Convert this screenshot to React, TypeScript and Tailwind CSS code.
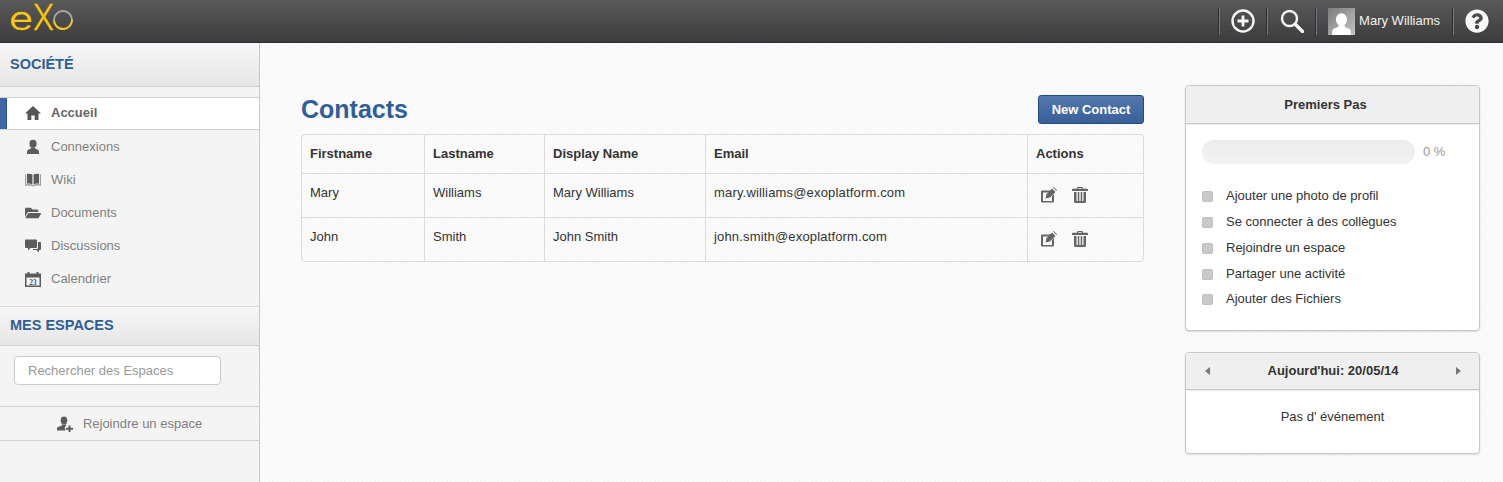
import { FaFolderOpen, FaQuestionCircle } from 'react-icons/fa'
import type { ReactNode } from 'react'

function Logo() {
  return (
    <svg viewBox="0 0 64 34" className="w-[64px] h-[34px] ml-[10px] self-start overflow-visible" fill="#fbc80f">
      <text x="-1" y="30" fontSize="33" fontWeight="300" fontFamily="Inter, sans-serif" stroke="#fbc80f" strokeWidth=".4" textLength="24" lengthAdjust="spacingAndGlyphs">e</text>
      <text x="23" y="30" fontSize="36" fontWeight="300" fontFamily="Inter, sans-serif" stroke="#fbc80f" strokeWidth=".3" textLength="21" lengthAdjust="spacingAndGlyphs">X</text>
      <circle cx="53" cy="20" r="9" fill="none" stroke="#a8a8a8" strokeWidth="1.800" />
      <path d="M44 20.500a9 9 0 0 0 18-1" fill="none" stroke="#fbc80f" strokeWidth="1.800" />
    </svg>
  )
}

function HomeIcon() {
  return (
    <svg viewBox="0 0 16 16" className="w-4 h-4" fill="currentColor">
      <path d="M8 1 16 8.500H13.500V15H9.700V10.500H6.300V15H2.500V8.500H0z" />
    </svg>
  )
}

function UserIcon({ className = 'w-4 h-4' }: { className?: string }) {
  return (
    <svg viewBox="0 0 16 16" className={className} fill="currentColor">
      <ellipse cx="8" cy="4.800" rx="3.600" ry="4" />
      <path d="M6 8.500h4l.4 1.200c1.700.6 3.600 1 3.600 3V15H2v-2.300c0-2 1.900-2.400 3.600-3z" />
    </svg>
  )
}

function BookIcon() {
  return (
    <svg viewBox="0 0 16 16" className="w-4 h-4" fill="currentColor">
      <path d="M0 2.500 1.200 2v10.500c2-.6 4.500-.6 6.800.7 2.300-1.300 4.800-1.300 6.800-.7V2l1.200.5V14c-2.500-.7-5.500-.7-8 .5-2.500-1.200-5.500-1.200-8-.5z" opacity=".55" />
      <path d="M2 2c2-.4 4-.3 5.400.6v9.800c-1.600-.8-3.500-1-5.400-.7zM14 2c-2-.4-4-.3-5.400.6v9.800c1.600-.8 3.500-1 5.400-.7z" />
    </svg>
  )
}

function ChatIcon() {
  return (
    <svg viewBox="0 0 16 16" className="w-4 h-4" fill="currentColor">
      <path d="M1 1.500h10a1 1 0 0 1 1 1V9a1 1 0 0 1-1 1H5.500L3 12.500V10H1a1 1 0 0 1-1-1V2.500a1 1 0 0 1 1-1z" />
      <path d="M13 4h2a1 1 0 0 1 1 1v6a1 1 0 0 1-1 1h-1v2.500L11.500 12H7.500l1-1H12a1 1 0 0 0 1-1z" />
    </svg>
  )
}

function CalendarIcon() {
  return (
    <svg viewBox="0 0 16 16" className="w-4 h-4">
      <path d="M0 2.500h2.500V1h2v1.500h7V1h2v1.500H16V16H0z" fill="currentColor" />
      <rect x="1.500" y="6.500" width="13" height="8" fill="#f4f4f4" />
      <text x="8" y="13.500" textAnchor="middle" fontSize="7.500" fontWeight="bold" fontFamily="'Liberation Serif', serif" fill="#555">23</text>
    </svg>
  )
}

function JoinIcon() {
  return (
    <svg viewBox="0 0 16 16" className="w-4 h-4" fill="currentColor">
      <ellipse cx="7" cy="4.500" rx="3.300" ry="4" />
      <path d="M5 8.500h4l.3 1.300C8 10.200 7.500 11.500 8 13c.2.600.5 1 .8 1.500H0v-1.800c0-2 2.800-2.400 4.600-3z" />
      <path d="M11.500 9.500h2v2.200H16v2h-2.500V16h-2v-2.300H9v-2h2.500z" />
    </svg>
  )
}

function EditIcon() {
  return (
    <svg viewBox="0 0 16 16" className="w-4 h-4 text-[#666]" fill="currentColor">
      <path d="M0 4.500a1 1 0 0 1 1-1h8.500L7.500 5.500H2V14h9V9l2-2v7.500a1 1 0 0 1-1 1H1a1 1 0 0 1-1-1z" />
      <path d="M4.500 11.500 5.500 7 11 1.500l3.500 3.500L9 10.500zM12 .5l.7-.5 3.300 3.300-.6.700z" />
    </svg>
  )
}

function TrashIcon() {
  return (
    <svg viewBox="0 0 16 16" className="w-4 h-4 text-[#666]" fill="currentColor">
      <path fillRule="evenodd" d="M5.500 0h5l.7 1.800h3.800c.6 0 1 .4 1 1V4H0V2.800c0-.6.4-1 1-1h3.800zM6.500 1l-.2.800h3.400L9.500 1z" />
      <path d="M2 5h2.500v9h1.300V5H7.300v9h1.400V5h1.500v9h1.300V5H14v9.500c0 .8-.7 1.500-1.500 1.500h-9c-.8 0-1.500-.7-1.500-1.500z" />
    </svg>
  )
}

const navItems = [
  { label: 'Connexions', icon: <UserIcon /> },
  { label: 'Wiki', icon: <BookIcon /> },
  { label: 'Documents', icon: <FaFolderOpen className="w-4 h-4" /> },
  { label: 'Discussions', icon: <ChatIcon /> },
  { label: 'Calendrier', icon: <CalendarIcon /> },
]

const contacts = [
  { first: 'Mary', last: 'Williams', display: 'Mary Williams', email: 'mary.williams@exoplatform.com' },
  { first: 'John', last: 'Smith', display: 'John Smith', email: 'john.smith@exoplatform.com' },
]

const steps = ['Ajouter une photo de profil', 'Se connecter à des collègues', 'Rejoindre un espace', 'Partager une activité', 'Ajouter des Fichiers']

function Separator() {
  return <div className="w-[2px] h-[27px] border-l border-[#2e2e2e] bg-[#6f7a86]" />
}

function SectionTitle({ children, className }: { children: ReactNode; className: string }) {
  return (
    <div className={`flex items-center pl-[10px] border-b border-[#d0d0d0] bg-gradient-to-b from-[#f7f7f7] to-[#e6e6e6] text-[14.500px] font-bold text-[#2f5f96] ${className}`}>
      {children}
    </div>
  )
}

export default function App() {
  return (
    <div className="w-[1503px] h-[482px] overflow-hidden flex flex-col bg-[repeating-linear-gradient(135deg,#fbfbfb_0px,#fbfbfb_2px,#f7f7f7_2px,#f7f7f7_3px)] font-['Liberation_Sans',Arial,sans-serif] text-[13px] text-[#333]">
      <header className="h-[43px] shrink-0 flex items-center border-b border-[#25303c] bg-gradient-to-b from-[#5a5a5a] to-[#3c3c3c]">
        <Logo />
        <div className="ml-auto flex items-center h-full">
          <Separator />
          <svg viewBox="0 0 24 24" className="w-[24px] h-[24px] ml-[11px] mr-[11px]" fill="none" stroke="#f5f5f5" strokeWidth="2.400">
            <circle cx="12" cy="12" r="10.500" />
            <path d="M12 6.500v11M6.500 12h11" strokeWidth="2.800" />
          </svg>
          <Separator />
          <svg viewBox="0 0 24 24" className="w-[24px] h-[24px] ml-[12px] mr-[11px]" fill="none" stroke="#f5f5f5">
            <circle cx="9.500" cy="9.500" r="7.500" strokeWidth="2.400" />
            <path d="m15.500 15.500 7 7" strokeWidth="3.400" strokeLinecap="round" />
          </svg>
          <Separator />
          <div className="ml-[11px] w-[27px] h-[27px] flex items-end justify-center overflow-hidden bg-gradient-to-br from-[#7c7c7c] to-[#c4c4c4]">
            <UserIcon className="w-[25px] h-[25px] text-white -mb-[2px]" />
          </div>
          <span className="ml-[4px] text-[13px] text-[#f2f2f2]">Mary Williams</span>
          <div className="ml-[12px]"><Separator /></div>
          <FaQuestionCircle className="w-[24px] h-[24px] ml-[11px] mr-[14px] text-[#f8f8f8]" />
        </div>
      </header>

      <div className="flex-1 flex min-h-0">
        <aside className="w-[260px] shrink-0 border-r border-[#c8c8c8] bg-[#f4f4f4] flex flex-col">
          <SectionTitle className="h-[44px] pt-[1px]">SOCIÉTÉ</SectionTitle>
          <nav className="pt-[10px] pb-[11px] border-b border-[#dcdcdc]">
            <a className="h-[33px] flex items-center bg-white border-y border-[#cfcfcf] font-bold text-[#666]">
              <span className="w-[7px] self-stretch bg-[#3f67a6] border-r border-[#2f5088]" />
              <span className="w-[16px] ml-[18px] mb-[2px] flex justify-center text-[#555]"><HomeIcon /></span>
              <span className="ml-[10px] mb-[2px]">Accueil</span>
            </a>
            {navItems.map((item) => (
              <a key={item.label} className="h-[33px] flex items-center text-[#808080]">
                <span className="w-[16px] ml-[25px] flex justify-center text-[#5c5c5c]">{item.icon}</span>
                <span className="ml-[10px]">{item.label}</span>
              </a>
            ))}
          </nav>
          <SectionTitle className="h-[39px]">MES ESPACES</SectionTitle>
          <div className="h-[61px] pt-[10px] pl-[14px] border-b border-[#d0d0d0]">
            <div className="w-[207px] h-[29px] flex items-center pl-[13px] bg-white border border-[#ccc] rounded-[4px] text-[#999]">
              Rechercher des Espaces
            </div>
          </div>
          <div className="h-[34px] flex items-center justify-center border-b border-[#d0d0d0] text-[#808080]">
            <span className="text-[#5c5c5c] mr-[10px]"><JoinIcon /></span>
            Rejoindre un espace
          </div>
        </aside>

        <main className="flex-1 flex pl-[41px] pr-[23px] pt-[42px]">
          <section className="w-[843px]">
            <div className="h-[49px] pt-[10px] flex items-start justify-between">
              <h1 className="text-[25px] leading-[30px] -mt-[1px] font-bold text-[#2f5f96]">Contacts</h1>
              <button className="w-[106px] h-[29px] rounded-[3px] border border-[#224a86] bg-gradient-to-b from-[#5477ae] to-[#3a5f99] text-white text-[13px] font-bold">
                New Contact
              </button>
            </div>
            <table className="w-[843px] table-fixed border-separate border-spacing-0 border border-[#dcdcdc] rounded-[4px]">
              <colgroup>
                <col className="w-[123px]" />
                <col className="w-[120px]" />
                <col className="w-[161px]" />
                <col className="w-[322px]" />
                <col />
              </colgroup>
              <thead>
                <tr className="h-[39px] text-left text-[13px] font-bold">
                  {['Firstname', 'Lastname', 'Display Name', 'Email', 'Actions'].map((h, i) => (
                    <th key={h} className={`pl-[8px] border-b border-[#dcdcdc] ${i < 4 ? 'border-r' : ''}`}>{h}</th>
                  ))}
                </tr>
              </thead>
              <tbody>
                {contacts.map((c, idx) => {
                  const rowBorder = idx === 0 ? 'border-b' : ''
                  return (
                    <tr key={c.email} className={idx === 0 ? 'h-[44px]' : 'h-[43px]'}>
                      <td className={`pl-[8px] pb-[6px] border-r border-[#dcdcdc] ${rowBorder}`}>{c.first}</td>
                      <td className={`pl-[8px] pb-[6px] border-r border-[#dcdcdc] ${rowBorder}`}>{c.last}</td>
                      <td className={`pl-[8px] pb-[6px] border-r border-[#dcdcdc] ${rowBorder}`}>{c.display}</td>
                      <td className={`pl-[8px] pb-[6px] border-r border-[#dcdcdc] tracking-[0.170px] ${rowBorder}`}>{c.email}</td>
                      <td className={`pl-[13px] pb-[2px] border-[#dcdcdc] ${rowBorder}`}>
                        <div className="flex items-center gap-[15px]">
                          <EditIcon />
                          <TrashIcon />
                        </div>
                      </td>
                    </tr>
                  )
                })}
              </tbody>
            </table>
          </section>

          <aside className="w-[295px] ml-[41px] flex flex-col gap-[21px]">
            <div className="h-[246px] bg-white border border-[#c8c8c8] rounded-[4px] shadow-[0_1px_2px_rgba(0,0,0,0.12)]">
              <div className="h-[38px] flex items-center justify-center pr-[14px] bg-[#efefef] border-b border-[#c8c8c8] rounded-t-[4px] text-[13px] font-bold shadow-[0_1px_1px_rgba(0,0,0,0.08)]">
                Premiers Pas
              </div>
              <div className="pl-[16px] pt-[16px]">
                <div className="flex items-center">
                  <div className="w-[213px] h-[24px] rounded-full bg-gradient-to-b from-[#ececec] to-[#f3f3f3]" />
                  <span className="ml-[8px] text-[#999]">0 %</span>
                </div>
                <ul className="mt-[19px] flex flex-col">
                  {steps.map((s) => (
                    <li key={s} className="h-[26px] flex items-center last:-mt-[1px]">
                      <span className="w-[11px] h-[11px] rounded-[2px] bg-[#c9c9c9] border border-[#c0c0c0]" />
                      <span className="ml-[13px]">{s}</span>
                    </li>
                  ))}
                </ul>
              </div>
            </div>
            <div className="h-[102px] bg-white border border-[#c8c8c8] rounded-[4px] shadow-[0_1px_2px_rgba(0,0,0,0.12)]">
              <div className="h-[37px] flex items-center justify-between pl-[19px] pr-[18px] bg-[#efefef] border-b border-[#c8c8c8] rounded-t-[4px] shadow-[0_1px_1px_rgba(0,0,0,0.08)]">
                <span className="w-0 h-0 border-y-[4px] border-y-transparent border-r-[5px] border-r-[#777]" />
                <span className="text-[13px] font-bold">Aujourd'hui: 20/05/14</span>
                <span className="w-0 h-0 border-y-[4px] border-y-transparent border-l-[5px] border-l-[#777]" />
              </div>
              <div className="pt-[17px] text-center">Pas d' événement</div>
            </div>
          </aside>
        </main>
      </div>
    </div>
  )
}
